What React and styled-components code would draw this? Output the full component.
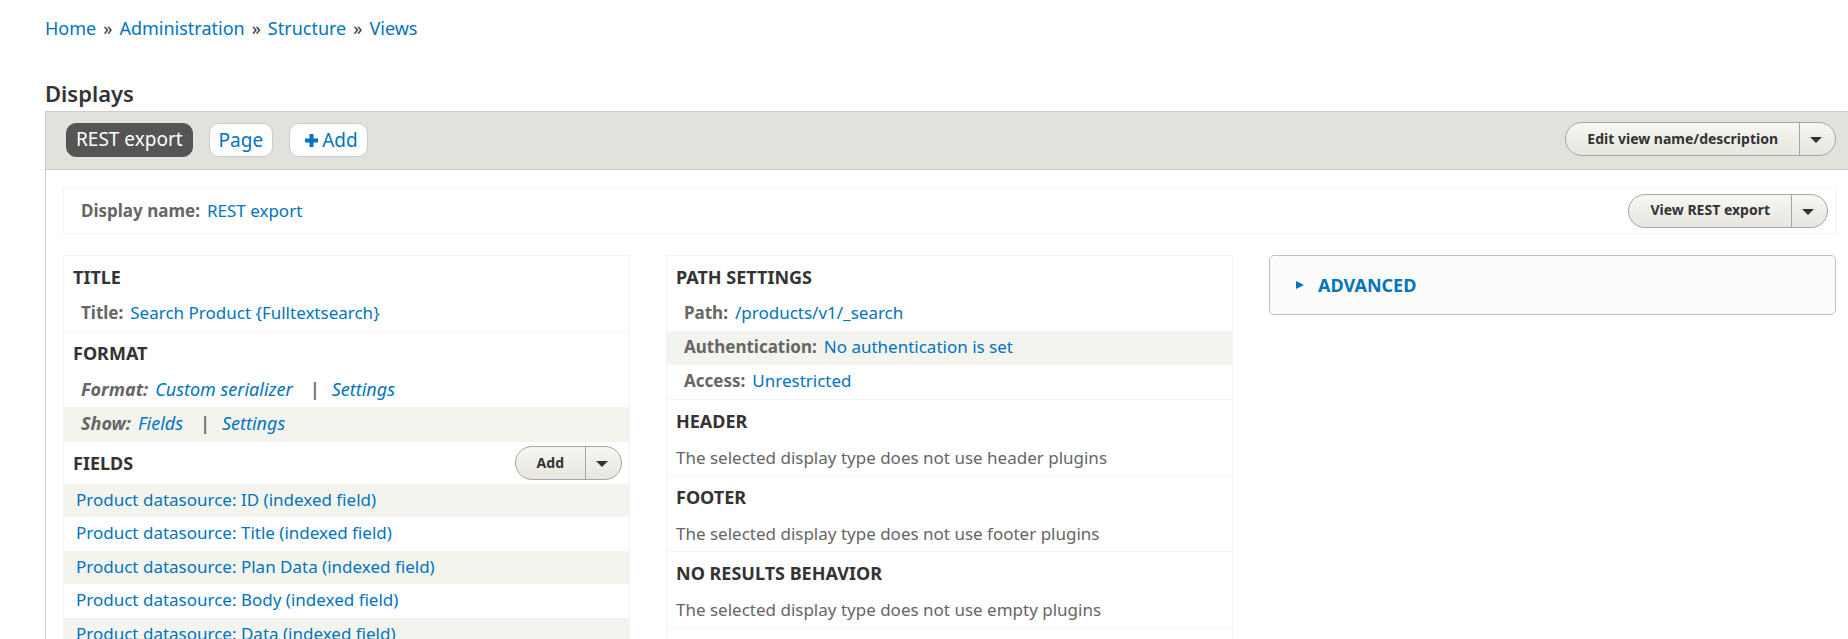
import React from 'react';
import styled, { createGlobalStyle } from 'styled-components';

const GlobalStyle = createGlobalStyle`
  *, *::before, *::after { box-sizing: border-box; }
  html, body { margin: 0; background: #fff; }
  body {
    color: #333;
    font: 17px/24px "Noto Sans", "Open Sans", sans-serif;
  }
  a { color: #0074bd; text-decoration: none; }
  a:hover { text-decoration: underline; }
  h2, h3, ul, ol, p { margin: 0; padding: 0; }
  ul, ol { list-style: none; }
  html { scrollbar-width: none; }
`;

const Page = styled.main`
  padding: 16px 0 0 45px;
`;

const Breadcrumb = styled.ol`
  display: flex;
  font-size: 18px;
  line-height: 24px;
  li + li::before {
    content: "»";
    margin: 0 7px;
  }
`;

const PageHeading = styled.h2`
  margin-top: 39px;
  font-size: 22px;
  line-height: 28px;
  font-weight: 600;
`;

const Panel = styled.section`
  margin-top: 4px;
  border: solid #ccc;
  border-width: 1px 0 0 1px;
`;

const TabBar = styled.div`
  display: flex;
  justify-content: space-between;
  align-items: flex-start;
  padding: 10px 12px 12px 20px;
  background: #e1e2dc;
  border-bottom: 1px solid #ccc;
`;

const Tabs = styled.ul`
  display: flex;
  gap: 16px;
  padding-top: 1px;
`;

const Tab = styled.a`
  display: flex;
  align-items: center;
  gap: 4px;
  height: 34px;
  padding: 0 9px ${(p) => (p.$active ? '2px' : '0')} ${(p) => (p.$wide ? '15px' : '9px')};
  border: 1px solid ${(p) => (p.$active ? '#555' : '#ccc')};
  border-radius: 10px;
  background: ${(p) => (p.$active ? '#555' : '#fff')};
  color: ${(p) => (p.$active ? '#fff' : '#0074bd')};
  font-size: 19px;
  line-height: 24px;
`;

const DropButton = styled.div`
  display: flex;
  height: 34px;
  border: 1px solid #a6a6a6;
  border-radius: 17px;
  background: linear-gradient(#f6f6f3, #e7e7df);
  overflow: hidden;
`;

const DropAction = styled.button`
  padding: 0 21px 1px;
  border: 0;
  background: none;
  color: #333;
  font: 700 14px/20px "Noto Sans", "Open Sans", sans-serif;
  cursor: pointer;
`;

const DropToggle = styled.button`
  display: grid;
  place-items: center;
  width: 36px;
  padding: 2px 3px 0 0;
  border: 0;
  border-left: 1px solid #a6a6a6;
  background: none;
  cursor: pointer;
  &::before {
    content: "";
    border: 6px solid transparent;
    border-top-color: #333;
    border-bottom-width: 0;
  }
`;

const Content = styled.div`
  padding: 17px 12px 0 17px;
`;

const DisplayTop = styled.div`
  display: flex;
  align-items: center;
  justify-content: space-between;
  height: 47px;
  padding: 0 7px 0 17px;
  border: 1px solid #f3f3f3;
`;

const Columns = styled.div`
  display: grid;
  grid-template-columns: repeat(3, minmax(0, 1fr));
  gap: 36px;
  align-items: start;
  margin-top: 21px;
`;

const Column = styled.div`
  border: solid #f3f3f3;
  border-width: 0 1px 1px;
`;

const Bucket = styled.section`
  border-top: 1px solid #f3f3f3;
`;

const BucketHeader = styled.header`
  display: flex;
  align-items: center;
  justify-content: space-between;
  height: ${(p) => (p.$tall ? '42px' : '41px')};
  padding: 0 7px 0 9px;
`;

const BucketTitle = styled.h3`
  font-size: 18px;
  line-height: 24px;
  font-weight: 700;
  text-transform: uppercase;
`;

const Setting = styled.div`
  height: 34px;
  padding: 4px 17px;
  color: #666;
  font-size: ${(p) => (p.$italic ? '18px' : '17px')};
  font-style: ${(p) => (p.$italic ? 'italic' : 'normal')};
  background: ${(p) => (p.$shaded ? '#f3f4ee' : 'transparent')};
`;

const Label = styled.strong`
  margin-right: 7px;
  color: #666;
  font-weight: 700;
`;

const Separator = styled.span`
  margin: 0 12px 0 17px;
  font-weight: 600;
`;

const EmptyText = styled.p`
  height: 34px;
  padding: 5px 9px;
  color: #666;
`;

const FieldItem = styled.li`
  height: 34px;
  padding: 4px 12px;
  &:nth-child(odd) {
    height: 33px;
    background: #f3f4ee;
  }
`;

const Advanced = styled.details`
  border: 1px solid #bfbfbf;
  border-radius: 5px;
  background: #fcfcfa;
`;

const AdvancedSummary = styled.summary`
  display: flex;
  align-items: center;
  gap: 14px;
  height: 58px;
  padding: 0 26px;
  color: #0074bd;
  font-size: 18px;
  font-weight: 700;
  text-transform: uppercase;
  cursor: pointer;
  &::before {
    content: "";
    border: 4px solid transparent;
    border-left: 8px solid #0074bd;
    border-right-width: 0;
  }
`;

const PlusIcon = () => (
  <svg width="13" height="13" viewBox="0 0 13 13" aria-hidden="true">
    <path d="M4.5 0h4v4.5H13v4H8.5V13h-4V8.5H0v-4h4.5z" fill="#0074bd" />
  </svg>
);

const SplitButton = ({ children }) => (
  <DropButton>
    <DropAction type="button">{children}</DropAction>
    <DropToggle type="button" aria-label="List additional actions" />
  </DropButton>
);

const SettingRow = ({ label, value, extra, shaded }) => (
  <Setting $italic={Boolean(extra)} $shaded={shaded}>
    <Label>{label}:</Label>
    <a href="#edit">{value}</a>
    {extra && (
      <>
        <Separator>|</Separator>
        <a href="#settings">{extra}</a>
      </>
    )}
  </Setting>
);

const crumbs = ['Home', 'Administration', 'Structure', 'Views'];
const fields = ['ID', 'Title', 'Plan Data', 'Body', 'Data'];
const emptyAreas = [
  ['Header', 'header'],
  ['Footer', 'footer'],
  ['No results behavior', 'empty'],
];

export default function App() {
  return (
    <>
      <GlobalStyle />
      <Page>
        <nav aria-label="Breadcrumb">
          <Breadcrumb>
            {crumbs.map((c) => (
              <li key={c}><a href="#crumb">{c}</a></li>
            ))}
          </Breadcrumb>
        </nav>
        <PageHeading>Displays</PageHeading>
        <Panel>
          <TabBar>
            <Tabs>
              <li><Tab href="#rest" $active>REST export</Tab></li>
              <li><Tab href="#page">Page</Tab></li>
              <li><Tab href="#add" $wide><PlusIcon />Add</Tab></li>
            </Tabs>
            <SplitButton>Edit view name/description</SplitButton>
          </TabBar>
          <Content>
            <DisplayTop>
              <div>
                <Label>Display name:</Label>
                <a href="#name">REST export</a>
              </div>
              <SplitButton>View REST export</SplitButton>
            </DisplayTop>
            <Columns>
              <Column>
                <Bucket>
                  <BucketHeader><BucketTitle>Title</BucketTitle></BucketHeader>
                  <SettingRow label="Title" value="Search Product {Fulltextsearch}" />
                </Bucket>
                <Bucket>
                  <BucketHeader><BucketTitle>Format</BucketTitle></BucketHeader>
                  <SettingRow label="Format" value="Custom serializer" extra="Settings" />
                  <SettingRow label="Show" value="Fields" extra="Settings" shaded />
                </Bucket>
                <Bucket>
                  <BucketHeader $tall>
                    <BucketTitle>Fields</BucketTitle>
                    <SplitButton>Add</SplitButton>
                  </BucketHeader>
                  <ul>
                    {fields.map((f) => (
                      <FieldItem key={f}>
                        <a href="#field">Product datasource: {f} (indexed field)</a>
                      </FieldItem>
                    ))}
                  </ul>
                </Bucket>
              </Column>
              <Column>
                <Bucket>
                  <BucketHeader><BucketTitle>Path settings</BucketTitle></BucketHeader>
                  <SettingRow label="Path" value="/products/v1/_search" />
                  <SettingRow label="Authentication" value="No authentication is set" shaded />
                  <SettingRow label="Access" value="Unrestricted" />
                </Bucket>
                {emptyAreas.map(([title, kind]) => (
                  <Bucket key={kind}>
                    <BucketHeader><BucketTitle>{title}</BucketTitle></BucketHeader>
                    <EmptyText>The selected display type does not use {kind} plugins</EmptyText>
                  </Bucket>
                ))}
                <Bucket>
                  <BucketHeader />
                </Bucket>
              </Column>
              <Advanced>
                <AdvancedSummary>Advanced</AdvancedSummary>
              </Advanced>
            </Columns>
          </Content>
        </Panel>
      </Page>
    </>
  );
}
